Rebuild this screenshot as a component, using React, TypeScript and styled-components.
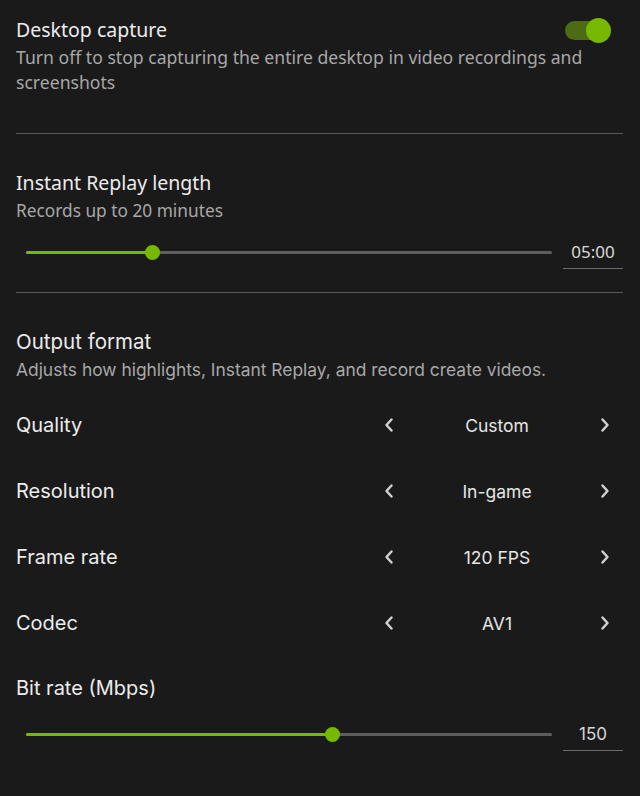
import React from "react";
import styled, { createGlobalStyle } from "styled-components";

const GlobalStyle = createGlobalStyle`
  html, body {
    margin: 0;
    padding: 0;
    background: #1a1a1a;
  }
`;

const Page = styled.div`
  width: 640px;
  height: 796px;
  box-sizing: border-box;
  padding: 0 17px 0 16px;
  background: #1a1a1a;
  color: #ececec;
  overflow: hidden;
`;

const Section = styled.section<{ $font: string; $pad: string }>`
  font-family: ${(p) => p.$font};
  padding: ${(p) => p.$pad};
`;

const Divider = styled.hr`
  margin: 0;
  border: none;
  border-top: 1px solid #5a5a5a;
`;

const HeadRow = styled.div`
  display: flex;
  align-items: center;
  justify-content: space-between;
`;

const Title = styled.div<{ $size: number }>`
  font-size: ${(p) => p.$size}px;
  line-height: 26px;
  color: #ececec;
`;

const Desc = styled.div<{ $size: number }>`
  margin-top: 2px;
  font-size: ${(p) => p.$size}px;
  line-height: 25px;
  color: #a8a8a8;
  max-width: 600px;
`;

const Toggle = styled.div`
  position: relative;
  width: 46px;
  height: 24px;
  margin-right: 12px;
`;

const ToggleTrack = styled.div`
  position: absolute;
  left: 0;
  top: 3px;
  width: 40px;
  height: 19px;
  border-radius: 10px;
  background: #4d6b14;
`;

const ToggleKnob = styled.div`
  position: absolute;
  right: 0;
  top: 0;
  width: 25px;
  height: 25px;
  border-radius: 50%;
  background: #76b900;
`;

const SliderRow = styled.div<{ $top: number }>`
  display: flex;
  align-items: center;
  margin-top: ${(p) => p.$top}px;
  padding-left: 10px;
`;

const Track = styled.div`
  position: relative;
  flex: 1;
  height: 3px;
  background: #5e5e5e;
  border-radius: 2px;
`;

const Fill = styled.div`
  position: absolute;
  left: 0;
  top: 0;
  height: 3px;
  background: #76b900;
  border-radius: 2px;
`;

const Thumb = styled.div`
  position: absolute;
  top: 50%;
  width: 15px;
  height: 15px;
  margin: -7.5px 0 0 -7.5px;
  border-radius: 50%;
  background: #76b900;
`;

const ValueBox = styled.div<{ $font: string }>`
  width: 60px;
  margin-left: 11px;
  padding: 5px 0;
  box-sizing: content-box;
  text-align: center;
  font-family: ${(p) => p.$font};
  font-size: 17px;
  line-height: 22px;
  color: #d8d8d8;
  border-bottom: 1px solid #6a6a6a;
`;

const OptionList = styled.div`
  margin-top: 10px;
`;

const OptionRow = styled.div`
  display: flex;
  align-items: center;
  height: 66px;
`;

const OptionLabel = styled.div`
  flex: 1;
  font-size: 20px;
  color: #ececec;
`;

const Picker = styled.div`
  display: flex;
  align-items: center;
  width: 240px;
  margin-right: 6px;
`;

const Arrow = styled.button`
  display: flex;
  align-items: center;
  justify-content: center;
  width: 24px;
  height: 24px;
  padding: 0;
  border: none;
  background: none;
  color: #d0d0d0;
`;

const PickerValue = styled.div`
  flex: 1;
  text-align: center;
  font-size: 17.5px;
  color: #e6e6e6;
`;

const BitRateHead = styled.div`
  margin-top: 19px;
`;

const Chevron: React.FC<{ dir: "left" | "right" }> = ({ dir }) => (
  <svg width="12" height="16" viewBox="0 0 12 16">
    <path
      d={dir === "left" ? "M8.5 2.5 L3.5 8 L8.5 13.5" : "M3.5 2.5 L8.5 8 L3.5 13.5"}
      fill="none"
      stroke="currentColor"
      strokeWidth="2.5"
      strokeLinecap="round"
      strokeLinejoin="round"
    />
  </svg>
);

const Slider: React.FC<{ pct: number; value: string; top: number; font: string }> = ({
  pct,
  value,
  top,
  font,
}) => (
  <SliderRow $top={top}>
    <Track>
      <Fill style={{ width: `${pct}%` }} />
      <Thumb style={{ left: `${pct}%` }} />
    </Track>
    <ValueBox $font={font}>{value}</ValueBox>
  </SliderRow>
);

const options = [
  { label: "Quality", value: "Custom" },
  { label: "Resolution", value: "In-game" },
  { label: "Frame rate", value: "120 FPS" },
  { label: "Codec", value: "AV1" },
];

const DIN = `"Noto Sans", Roboto, sans-serif`;
const SANS = `Inter, "Noto Sans", sans-serif`;

const App: React.FC = () => {
  return (
    <Page>
      <GlobalStyle />
      <Section $font={DIN} $pad="17px 0 38px">
        <HeadRow>
          <Title $size={19.5}>Desktop capture</Title>
          <Toggle>
            <ToggleTrack />
            <ToggleKnob />
          </Toggle>
        </HeadRow>
        <Desc $size={17.6}>
          Turn off to stop capturing the entire desktop in video recordings and
          screenshots
        </Desc>
      </Section>
      <Divider />
      <Section $font={DIN} $pad="36px 0 23px">
        <Title $size={19.5}>Instant Replay length</Title>
        <Desc $size={17.3}>Records up to 20 minutes</Desc>
        <Slider pct={24} value="05:00" top={13} font={DIN} />
      </Section>
      <Divider />
      <Section $font={SANS} $pad="36px 0 0">
        <Title $size={20.5}>Output format</Title>
        <Desc $size={17.4}>Adjusts how highlights, Instant Replay, and record create videos.</Desc>
        <OptionList>
          {options.map((o) => (
            <OptionRow key={o.label}>
              <OptionLabel>{o.label}</OptionLabel>
              <Picker>
                <Arrow>
                  <Chevron dir="left" />
                </Arrow>
                <PickerValue>{o.value}</PickerValue>
                <Arrow>
                  <Chevron dir="right" />
                </Arrow>
              </Picker>
            </OptionRow>
          ))}
        </OptionList>
        <BitRateHead>
          <Title $size={20}>Bit rate (Mbps)</Title>
        </BitRateHead>
        <Slider pct={58.3} value="150" top={17} font={SANS} />
      </Section>
    </Page>
  );
};

export default App;
